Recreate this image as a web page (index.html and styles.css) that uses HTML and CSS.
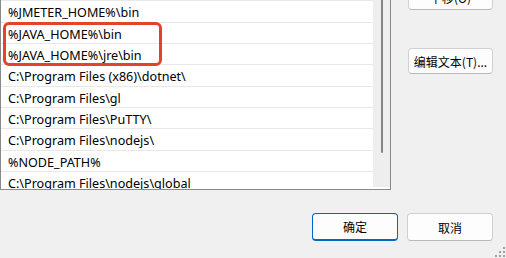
FILE: index.html
```html
<!DOCTYPE html>
<html lang="zh-CN">
<head>
<meta charset="utf-8">
<title>编辑环境变量</title>
<link rel="stylesheet" href="styles.css">
</head>
<body>
<div class="dialog">
  <div class="main">
    <div class="listbox">
      <div class="rows">
        <div class="row"></div>
        <div class="row">%JMETER_HOME%\bin</div>
        <div class="row">%JAVA_HOME%\bin</div>
        <div class="row">%JAVA_HOME%\jre\bin</div>
        <div class="row">C:\Program Files (x86)\dotnet\</div>
        <div class="row">C:\Program Files\gl</div>
        <div class="row">C:\Program Files\PuTTY\</div>
        <div class="row">C:\Program Files\nodejs\</div>
        <div class="row">%NODE_PATH%</div>
        <div class="row">C:\Program Files\nodejs\global</div>
      </div>
      <div class="scrollbar"><div class="thumb"></div></div>
      <div class="highlight"></div>
    </div>
    <div class="side">
      <button class="btn side-btn">下移(O)</button>
      <button class="btn side-btn">编辑文本(T)...</button>
    </div>
  </div>
  <div class="footer">
    <button class="btn foot-btn primary">确定</button>
    <button class="btn foot-btn">取消</button>
  </div>
  <svg class="grip" width="10" height="10" viewBox="0 0 10 10">
    <rect x="8" y="0" width="2" height="2" fill="#a0a0a0"/>
    <rect x="4" y="4" width="2" height="2" fill="#a0a0a0"/>
    <rect x="8" y="4" width="2" height="2" fill="#a0a0a0"/>
    <rect x="0" y="8" width="2" height="2" fill="#a0a0a0"/>
    <rect x="4" y="8" width="2" height="2" fill="#a0a0a0"/>
    <rect x="8" y="8" width="2" height="2" fill="#a0a0a0"/>
  </svg>
</div>
</body>
</html>
```

FILE: styles.css
```css
* { box-sizing: border-box; }
html, body {
  margin: 0;
  padding: 0;
  width: 506px;
  height: 258px;
  overflow: hidden;
  background: #f0f0f0;
}
.dialog {
  position: relative;
  width: 506px;
  height: 258px;
  display: flex;
  flex-direction: column;
  font-family: "Noto Sans", "Noto Sans CJK SC", sans-serif;
  font-size: 12.6px;
  color: #000;
}
.main {
  display: flex;
  gap: 17px;
  height: 190px;
}
.listbox {
  position: relative;
  width: 391px;
  height: 190px;
  background: #fff;
  border-left: 1px solid #8a8a8a;
  border-right: 1px solid #8a8a8a;
  border-bottom: 1px solid #8a8a8a;
  display: flex;
  overflow: hidden;
}
.rows {
  flex: 1;
  margin-top: -20px;
  display: flex;
  flex-direction: column;
}
.row {
  flex: 0 0 auto;
  height: 21.33px;
  border-bottom: 1px solid #e8e8e8;
  padding-left: 7px;
  line-height: 21px;
  padding-top: 1px;
  white-space: nowrap;
}
.scrollbar {
  width: 17px;
  background: #eeeeee;
  display: flex;
  justify-content: center;
  height: 187px;
}
.thumb {
  width: 2px;
  margin-left: 1px;
  height: 153px;
  background: #858585;
  border-radius: 0 0 1px 1px;
}
.highlight {
  position: absolute;
  left: 2px;
  top: 22px;
  width: 159px;
  height: 44px;
  border: 3px solid #e4422a;
  border-radius: 6px;
}
.side {
  display: flex;
  flex-direction: column;
  gap: 38px;
  margin-top: -16px;
}
.btn {
  font-family: "Noto Sans CJK SC", "Noto Sans", sans-serif;
  font-size: 12px;
  color: #000;
  background: #fdfdfd;
  border: 1px solid #d0d0d0;
  border-bottom-color: #b8b8b8;
  border-radius: 4px;
  padding: 0;
  margin: 0;
}
.side-btn {
  width: 85px;
  height: 26px;
}
.footer {
  display: flex;
  justify-content: flex-end;
  gap: 9px;
  padding-right: 13px;
  margin-top: 23px;
}
.foot-btn {
  width: 86px;
  height: 28px;
}
.primary {
  border: 1px solid #0067c0;
  border-bottom: 2px solid #0067c0;
}
.grip {
  position: absolute;
  right: 1px;
  bottom: 1px;
}
```
